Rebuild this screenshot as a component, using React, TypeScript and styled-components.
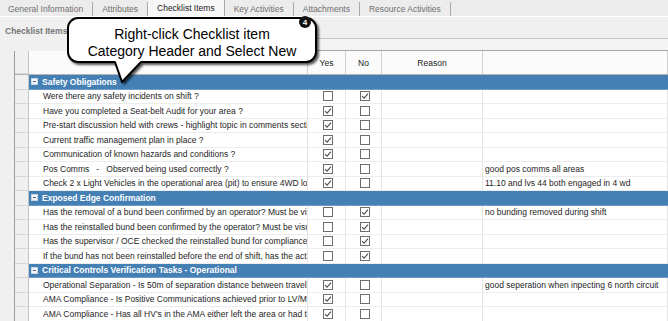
import styled, { createGlobalStyle, css } from "styled-components";

const GlobalStyle = createGlobalStyle`
  html, body {
    margin: 0;
    padding: 0;
    background: #f0f0f0;
  }
  body {
    font-family: "Liberation Sans", Arial, sans-serif;
  }
`;

const Page = styled.div`
  position: relative;
  width: 668px;
  height: 321px;
  overflow: hidden;
  background: #f0f0f0;
  font-size: 8.5px;
  color: #1e1e1e;
`;

const TabBar = styled.div`
  display: flex;
  height: 17px;
  background: #ececec;
  border-bottom: 1px solid #ffffff;
  box-sizing: border-box;
`;

const Tab = styled.div<{ $active?: boolean }>`
  display: flex;
  align-items: center;
  padding: 0 9px;
  border-right: 1px solid #a8a8a8;
  color: ${(p) => (p.$active ? "#1c1c1c" : "#707070")};
  background: ${(p) => (p.$active ? "#f7f7f7" : "transparent")};
  margin-top: ${(p) => (p.$active ? "0" : "2px")};
  &:first-child {
    padding-left: 8px;
  }
`;

const GroupHeader = styled.div`
  display: flex;
  height: 34px;
`;

const GroupLabel = styled.div`
  width: 68px;
  padding: 9px 0 0 5px;
  box-sizing: border-box;
  font-weight: bold;
  color: #767676;
  white-space: nowrap;
`;

const GroupRule = styled.div`
  flex: 1;
  margin-top: 21px;
  border-top: 1px solid #c6c6c6;
  border-bottom: 1px solid #a5a5a5;
  background: #f4f4f4;
`;

const Grid = styled.div`
  margin-left: 14px;
  border-left: 1px solid #9c9c9c;
  background: #ffffff;
`;

const cols = css`
  display: grid;
  grid-template-columns: 14px 279px 38px 36px 101px 1fr;
`;

const HeaderRow = styled.div`
  ${cols};
  height: 24px;
  background: #fbfbfb;
  border-bottom: 1px solid #b4b4b4;
  box-sizing: border-box;
`;

const HeaderCell = styled.div`
  display: flex;
  align-items: center;
  justify-content: center;
  border-right: 1px solid #d2d2d2;
  color: #222;
`;

const SectionRow = styled.div`
  ${cols};
  height: 14.5px;
`;

const ItemRow = styled.div`
  ${cols};
  height: 14.5px;
`;

const Selector = styled.div`
  background: #f0f0f0;
  border-right: 1px solid #c4c4c4;
  border-bottom: 1px solid #d6d6d6;
  box-sizing: border-box;
`;

const SectionBand = styled.div`
  grid-column: 2 / -1;
  display: flex;
  align-items: center;
  gap: 4px;
  padding-left: 2px;
  background: #4580b5;
  border-bottom: 1px solid #6f9cc6;
  box-sizing: border-box;
  color: #ffffff;
  font-weight: bold;
`;

const CollapseIcon = styled.span`
  position: relative;
  width: 7px;
  height: 7px;
  background: #f2f4f7;
  border: 1px solid #c9d6e4;
  box-sizing: border-box;
  &::after {
    content: "";
    position: absolute;
    left: 1px;
    right: 1px;
    top: 2px;
    height: 1px;
    background: #4a6b92;
  }
`;

const cellLine = css`
  border-right: 1px solid #e4e4e4;
  border-bottom: 1px solid #ececec;
  box-sizing: border-box;
`;

const DescCell = styled.div`
  ${cellLine};
  padding-left: 14px;
  display: flex;
  align-items: center;
  white-space: pre;
  overflow: hidden;
`;

const CheckCell = styled.div`
  ${cellLine};
  display: flex;
  align-items: center;
  justify-content: center;
  padding-left: 2px;
`;

const NoteCell = styled.div`
  ${cellLine};
  display: flex;
  align-items: center;
  padding-left: 2px;
  white-space: nowrap;
  overflow: hidden;
`;

const Box = styled.span`
  display: inline-flex;
  width: 10px;
  height: 10px;
  border: 1px solid #6e6e6e;
  background: #ffffff;
  box-sizing: border-box;
  svg {
    width: 8px;
    height: 8px;
  }
`;

const Callout = styled.div`
  position: absolute;
  left: 0;
  top: 0;
  width: 668px;
  height: 100px;
  pointer-events: none;
`;

const CalloutShape = styled.svg`
  position: absolute;
  left: 0;
  top: 0;
  overflow: visible;
  filter: drop-shadow(2px 2px 1.2px rgba(0, 0, 0, 0.65));
`;

const CalloutText = styled.div`
  position: absolute;
  left: 68px;
  top: 26px;
  width: 248px;
  text-align: center;
  font-size: 14px;
  line-height: 17px;
  color: #000;
`;

const Badge = styled.div`
  position: absolute;
  left: 299px;
  top: 16px;
  width: 12px;
  height: 12px;
  border-radius: 50%;
  background: #111;
  color: #fff;
  font-size: 8px;
  font-weight: bold;
  display: flex;
  align-items: center;
  justify-content: center;
`;

type Item = { text: string; yes: boolean; no: boolean; note?: string };
type Section = { title: string; items: Item[] };

const sections: Section[] = [
  {
    title: "Safety Obligations",
    items: [
      { text: "Were there any safety incidents on shift ?", yes: false, no: true },
      { text: "Have you completed a Seat-belt Audit for your area ?", yes: true, no: false },
      { text: "Pre-start discussion held with crews - highlight topic in comments section", yes: true, no: false },
      { text: "Current traffic management plan in place ?", yes: true, no: false },
      { text: "Communication of known hazards and conditions ?", yes: true, no: false },
      { text: "Pos Comms   -   Observed being used correctly ?", yes: true, no: false, note: "good pos comms all areas" },
      { text: "Check 2 x Light Vehicles in the operational area (pit) to ensure 4WD locked in", yes: true, no: false, note: "11.10 and lvs 44 both engaged in 4 wd" },
    ],
  },
  {
    title: "Exposed Edge Confirmation",
    items: [
      { text: "Has the removal of a bund been confirmed by an operator? Must be visual", yes: false, no: true, note: "no bunding removed during shift" },
      { text: "Has the reinstalled bund been confirmed by the operator? Must be visual", yes: false, no: true },
      { text: "Has the supervisor / OCE checked the reinstalled bund for compliance", yes: false, no: true },
      { text: "If the bund has not been reinstalled before the end of shift, has the action", yes: false, no: true },
    ],
  },
  {
    title: "Critical Controls Verification Tasks - Operational",
    items: [
      { text: "Operational Separation - Is 50m of separation distance between travelling", yes: true, no: false, note: "good seperation when inpecting 6 north circuit" },
      { text: "AMA Compliance - Is Positive Communications achieved prior to LV/MV entry", yes: true, no: false },
      { text: "AMA Compliance - Has all HV's in the AMA either left the area or had their", yes: true, no: false },
    ],
  },
];

const tabs = ["General Information", "Attributes", "Checklist Items", "Key Activities", "Attachments", "Resource Activities"];

function Check({ on }: { on: boolean }) {
  return (
    <Box>
      {on && (
        <svg viewBox="0 0 8 8">
          <path d="M1 4.1 L3.1 6.2 L7 1.7" fill="none" stroke="#4d4d4d" strokeWidth="1.1" />
        </svg>
      )}
    </Box>
  );
}

export default function App() {
  return (
    <Page>
      <GlobalStyle />
      <TabBar>
        {tabs.map((t) => (
          <Tab key={t} $active={t === "Checklist Items"}>
            {t}
          </Tab>
        ))}
      </TabBar>
      <GroupHeader>
        <GroupLabel>Checklist Items</GroupLabel>
        <GroupRule />
      </GroupHeader>
      <Grid>
        <HeaderRow>
          <Selector />
          <HeaderCell />
          <HeaderCell>Yes</HeaderCell>
          <HeaderCell>No</HeaderCell>
          <HeaderCell>Reason</HeaderCell>
          <HeaderCell />
        </HeaderRow>
        {sections.map((s) => (
          <div key={s.title}>
            <SectionRow>
              <Selector />
              <SectionBand>
                <CollapseIcon />
                {s.title}
              </SectionBand>
            </SectionRow>
            {s.items.map((it) => (
              <ItemRow key={it.text}>
                <Selector />
                <DescCell>{it.text}</DescCell>
                <CheckCell>
                  <Check on={it.yes} />
                </CheckCell>
                <CheckCell>
                  <Check on={it.no} />
                </CheckCell>
                <CheckCell />
                <NoteCell>{it.note}</NoteCell>
              </ItemRow>
            ))}
          </div>
        ))}
      </Grid>
      <Callout>
        <CalloutShape width="668" height="100" viewBox="0 0 668 100">
          <path
            d="M78 18 H306 A10 10 0 0 1 316 28 V52 A10 10 0 0 1 306 62 H141 L122 82 L115 62 H78 A10 10 0 0 1 68 52 V28 A10 10 0 0 1 78 18 Z"
            fill="#ffffff"
            stroke="#000000"
            strokeWidth="2"
            strokeLinejoin="round"
          />
        </CalloutShape>
        <CalloutText>
          Right-click Checklist item
          <br />
          Category Header and Select New
        </CalloutText>
        <Badge>4</Badge>
      </Callout>
    </Page>
  );
}
